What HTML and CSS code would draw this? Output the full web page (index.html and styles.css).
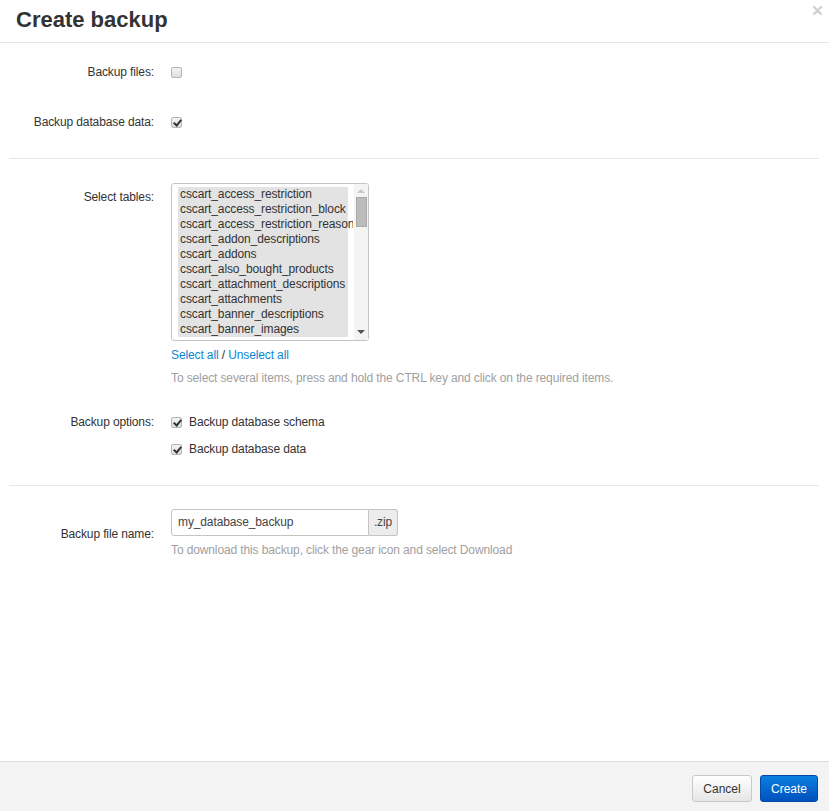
FILE: index.html
```html
<!DOCTYPE html>
<html>
<head>
<meta charset="utf-8">
<link rel="stylesheet" href="styles.css">
</head>
<body>
<div class="dialog">
  <header class="dlg-header">
    <h1 class="dlg-title">Create backup</h1>
    <span class="close-btn"><svg width="9" height="9" viewBox="0 0 9 9"><path d="M1 1 L8 8 M8 1 L1 8" stroke="#cfcfcf" stroke-width="2.2" stroke-linecap="round"/></svg></span>
  </header>

  <main class="dlg-body">
    <section class="group group-first">
      <div class="row row-check">
        <label class="label">Backup files:</label>
        <div class="control"><span class="cb"></span></div>
      </div>
      <div class="row row-check row-second">
        <label class="label">Backup database data:</label>
        <div class="control"><span class="cb checked"></span></div>
      </div>
    </section>

    <section class="group group-tables">
      <div class="row row-top">
        <label class="label label-top">Select tables:</label>
        <div class="control">
          <div class="listbox">
            <div class="list">
              <div class="opt">cscart_access_restriction</div>
              <div class="opt">cscart_access_restriction_block</div>
              <div class="opt">cscart_access_restriction_reason</div>
              <div class="opt">cscart_addon_descriptions</div>
              <div class="opt">cscart_addons</div>
              <div class="opt">cscart_also_bought_products</div>
              <div class="opt">cscart_attachment_descriptions</div>
              <div class="opt">cscart_attachments</div>
              <div class="opt">cscart_banner_descriptions</div>
              <div class="opt">cscart_banner_images</div>
            </div>
            <div class="scrollbar">
              <span class="arrow arrow-up"></span>
              <span class="thumb"></span>
              <span class="arrow arrow-down"></span>
            </div>
          </div>
          <div class="links"><a href="#">Select all</a> / <a href="#">Unselect all</a></div>
          <p class="help">To select several items, press and hold the CTRL key and click on the required items.</p>
        </div>
      </div>
      <div class="row row-options">
        <label class="label">Backup options:</label>
        <div class="control options">
          <div class="opt-line"><span class="cb checked"></span><span>Backup database schema</span></div>
          <div class="opt-line"><span class="cb checked"></span><span>Backup database data</span></div>
        </div>
      </div>
    </section>

    <section class="group group-file">
      <div class="row row-file">
        <label class="label">Backup file name:</label>
        <div class="control">
          <div class="input-group">
            <span class="input">my_database_backup</span>
            <span class="addon">.zip</span>
          </div>
          <p class="help help-file">To download this backup, click the gear icon and select Download</p>
        </div>
      </div>
    </section>
  </main>

  <footer class="dlg-footer">
    <button class="btn btn-cancel">Cancel</button>
    <button class="btn btn-primary">Create</button>
  </footer>
</div>
</body>
</html>
```

FILE: styles.css
```css
* { box-sizing: border-box; }
html, body { margin: 0; padding: 0; }
body {
  font-family: "Liberation Sans", Arial, sans-serif;
  font-size: 12px;
  letter-spacing: -0.12px;
  color: #333;
  background: #fff;
  width: 829px;
  height: 811px;
  overflow: hidden;
}
.dialog {
  display: flex;
  flex-direction: column;
  height: 811px;
}
.dlg-header {
  position: relative;
  height: 43px;
  border-bottom: 1px solid #e5e5e5;
  padding: 0 16px;
}
.dlg-title {
  margin: 0;
  font-size: 22px;
  font-weight: bold;
  letter-spacing: 0;
  line-height: 40px;
  color: #333;
}
.close-btn {
  position: absolute;
  top: 6px;
  right: 7px;
  display: block;
  line-height: 0;
}
.dlg-body {
  flex: 1;
  padding: 0 10px 0 9px;
}
.group { border-bottom: 1px solid #e8e8e8; }
.group-first { padding: 17px 0 24px; }
.group-tables { padding: 24px 0 27px; }
.group-file { border-bottom: none; padding: 23px 0 0; }
.row {
  display: grid;
  grid-template-columns: 145px 1fr;
  column-gap: 17px;
  align-items: center;
}
.row-check { height: 24px; }
.row-second { margin-top: 26px; }
.row-top { align-items: start; }
.label {
  text-align: right;
  color: #333;
  line-height: 18px;
}
.label-top { padding-top: 5px; }
.cb {
  display: inline-block;
  width: 11px;
  height: 11px;
  border: 1px solid #b4b4b4;
  border-radius: 2px;
  background: linear-gradient(#f4f4f4, #dedede);
  position: relative;
  vertical-align: middle;
}
.cb.checked::after {
  content: "";
  position: absolute;
  left: 3px;
  top: 0px;
  width: 3px;
  height: 6px;
  border: solid #333;
  border-width: 0 2px 2px 0;
  transform: rotate(40deg);
}
.listbox {
  display: flex;
  width: 198px;
  height: 158px;
  border: 1px solid #c4c4c4;
  border-radius: 3px;
  background: #fff;
  padding: 3px 0 0 6px;
}
.list {
  width: 176px;
  overflow: hidden;
}
.opt {
  width: 170px;
  background: #e3e3e3;
  padding-left: 2px;
  line-height: 15px;
  white-space: nowrap;
  color: #333;
  font-size: 12px;
}
.scrollbar {
  width: 14px;
  margin-left: 1px;
  margin-top: -3px;
  height: 156px;
  background: #f4f4f4;
  display: flex;
  flex-direction: column;
  align-items: center;
}
.arrow {
  width: 0; height: 0;
  border-left: 4px solid transparent;
  border-right: 4px solid transparent;
}
.arrow-up { border-bottom: 4px solid #c8c8c8; margin-top: 5px; }
.arrow-down { border-top: 4px solid #555; margin-top: auto; margin-bottom: 6px; }
.thumb {
  width: 11px;
  height: 30px;
  margin-top: 4px;
  background: #bcbcbc;
  border: 1px solid #a9a9a9;
}
.links {
  margin-top: 5px;
  line-height: 18px;
  color: #333;
}
.links a { color: #0b87d4; text-decoration: none; }
.help {
  margin: 5px 0 0;
  color: #a0a0a0;
  line-height: 18px;
}
.row-options { align-items: start; margin-top: 26px; }
.row-options .label { line-height: 18px; }
.options { display: flex; flex-direction: column; gap: 9px; }
.opt-line { display: flex; align-items: center; gap: 7px; line-height: 18px; }
.input-group { display: flex; width: 227px; height: 27px; }
.input {
  width: 198px;
  border: 1px solid #c4c4c4;
  border-radius: 3px 0 0 3px;
  padding: 0 6px;
  line-height: 25px;
  color: #444;
  font-size: 12px;
}
.addon {
  width: 29px;
  border: 1px solid #c4c4c4;
  border-left: none;
  border-radius: 0 3px 3px 0;
  background: #ececec;
  text-align: center;
  line-height: 25px;
  color: #444;
}
.help-file { margin-top: 5px; }
.dlg-footer {
  height: 50px;
  background: #f3f3f3;
  border-top: 1px solid #ddd;
  display: flex;
  justify-content: flex-end;
  align-items: flex-start;
  gap: 8px;
  padding: 13px 11px 0 0;
}
.btn {
  font-family: "Liberation Sans", Arial, sans-serif;
  font-size: 12px;
  height: 27px;
  border-radius: 3px;
  padding: 0 8px;
  cursor: pointer;
}
.btn-cancel {
  width: 60px;
  background: linear-gradient(#ffffff, #e6e6e6);
  border: 1px solid #c8c8c8;
  color: #333;
}
.btn-primary {
  width: 58px;
  background: linear-gradient(#0a80e0, #0051bd);
  border: 1px solid #0449a8;
  color: #fff;
}
```
